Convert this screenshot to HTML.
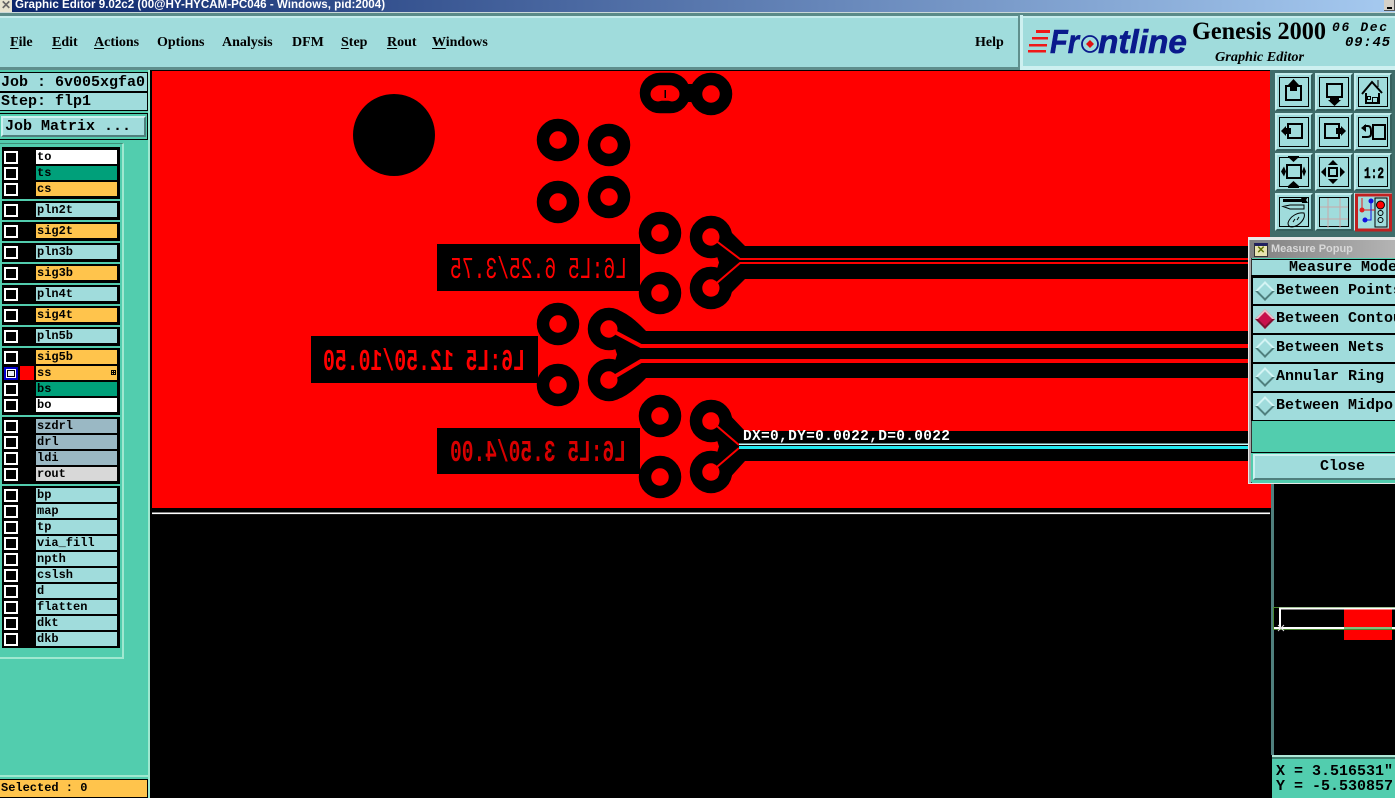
<!DOCTYPE html>
<html><head><meta charset="utf-8"><style>
html,body{margin:0;padding:0;width:1395px;height:798px;overflow:hidden;background:#000}
div{position:absolute;box-sizing:border-box}
svg{position:absolute;left:0;top:0}
.m{font:bold 15px "Liberation Mono",monospace;color:#000;white-space:pre}
.menu{font:bold 14px "Liberation Serif",serif;top:35px;color:#000;white-space:pre}
.menu u{text-underline-offset:2px}
.f{left:2px;width:118px;background:#000}
.l{left:36px;width:81px;height:14px;font:bold 12px/15px "Liberation Mono",monospace;padding-left:1px;color:#000;white-space:pre}
.c{left:4px;width:14px;height:13px;background:#000;border:2px solid #fff}
.c.sel{border-color:#0000c8;background:#fff}
.c.sel:after{content:"";position:absolute;left:1px;top:1px;width:8px;height:7px;background:#e8f0f0;border:1px solid #000;box-sizing:border-box}
.a{background:#a0dcdc}.o{background:#ffc44c}.g{background:#00a07a}.w{background:#fff}.s{background:#9ab8c4}
.b{background:#a0dcdc;border:2px solid;border-color:#c2ecec #36605e #36605e #c2ecec;width:38px;height:38px}
.b:after{content:"";position:absolute;left:2px;top:2px;right:2px;bottom:2px;border:1px solid #000}
.row{left:3px;width:147px;height:29px;background:#a0dcdc;border-top:2px solid #000}
.row span{position:absolute;left:25px;top:4px;font:bold 15px "Liberation Mono",monospace;white-space:pre}
.d{position:absolute;left:5px;top:6px;width:10px;height:10px;transform:rotate(45deg);border:2px solid;border-color:#d4f4f4 #4f7f7d #4f7f7d #d4f4f4}
</style></head><body>

<svg width="1395" height="798" viewBox="0 0 1395 798">
<rect x="152" y="71" width="1120" height="437" fill="#f00"/>
<rect x="152" y="512.5" width="1118" height="1.6" fill="#fff"/>
<circle cx="394" cy="135" r="41" fill="#000"/>
<g fill="#000">
<rect x="437" y="244" width="203" height="47"/>
<rect x="311" y="336" width="227" height="47"/>
<rect x="437" y="428" width="203" height="46"/>
<path d="M726 227L745 246H1270V279H745L726 298L711 288L719 262.5L711 237Z"/>
<path d="M618 310Q630 314 646 331H1270V378H646Q630 395 618 399L609 380L617 354.5L609 329Z"/>
<path d="M726 411L745 431H1270V461H745L726 482L711 472L719 446.5L711 421Z"/>
<rect x="685" y="84" width="15" height="18"/>
</g>
<g fill="none" stroke="#000" stroke-width="12.5">
<rect x="646" y="79" width="38" height="28" rx="14"/>
<circle cx="711" cy="94" r="15"/>
<circle cx="558" cy="140" r="15"/><circle cx="609" cy="145" r="15"/>
<circle cx="558" cy="202" r="15"/><circle cx="609" cy="197" r="15"/>
<circle cx="660" cy="233" r="15"/><circle cx="711" cy="237" r="15"/>
<circle cx="660" cy="293" r="15"/><circle cx="711" cy="288" r="15"/>
<circle cx="558" cy="324" r="15"/><circle cx="609" cy="329" r="15"/>
<circle cx="558" cy="385" r="15"/><circle cx="609" cy="380" r="15"/>
<circle cx="660" cy="416" r="15"/><circle cx="711" cy="421" r="15"/>
<circle cx="660" cy="477" r="15"/><circle cx="711" cy="472" r="15"/>
</g>
<g fill="#f00">
<circle cx="658" cy="94" r="7.500"/><circle cx="672" cy="94" r="7.500"/>
<circle cx="711" cy="94" r="8.500"/>
<circle cx="558" cy="140" r="8.500"/><circle cx="609" cy="145" r="8.500"/>
<circle cx="558" cy="202" r="8.500"/><circle cx="609" cy="197" r="8.500"/>
<circle cx="660" cy="233" r="8.500"/><circle cx="711" cy="237" r="8.500"/>
<circle cx="660" cy="293" r="8.500"/><circle cx="711" cy="288" r="8.500"/>
<circle cx="558" cy="324" r="8.500"/><circle cx="609" cy="329" r="8.500"/>
<circle cx="558" cy="385" r="8.500"/><circle cx="609" cy="380" r="8.500"/>
<circle cx="660" cy="416" r="8.500"/><circle cx="711" cy="421" r="8.500"/>
<circle cx="660" cy="477" r="8.500"/><circle cx="711" cy="472" r="8.500"/>
</g>
<rect x="664.500" y="90" width="1.500" height="8" fill="#000"/>
<g fill="none" stroke="#f00">
<path d="M711 237L740 259H1270M711 288L740 263H1270" stroke-width="2"/>
<path d="M609 329L641 346H1270M609 380L641 361H1270" stroke-width="4"/>
<path d="M711 421L739 445M711 472L739 448" stroke-width="2"/>
</g>
<rect x="739" y="443.500" width="531" height="1.500" fill="#c8ffff"/>
<rect x="739" y="446" width="531" height="3" fill="#20e8f0"/>
<g fill="#f00" font-family="Liberation Mono,monospace">
<text transform="translate(627,278) scale(-1,1)" x="0" y="0" font-size="31" textLength="177" lengthAdjust="spacingAndGlyphs">L6:L5 6.25/3.75</text>
<text transform="translate(525,370) scale(-1,1)" x="0" y="0" font-size="31" font-weight="bold" textLength="202" lengthAdjust="spacingAndGlyphs">L6:L5 12.50/10.50</text>
<text transform="translate(626,461) scale(-1,1)" x="0" y="0" font-size="31" font-weight="bold" fill="#d80000" textLength="176" lengthAdjust="spacingAndGlyphs">L6:L5 3.50/4.00</text>
</g>
<text x="743" y="440" font-family="Liberation Mono,monospace" font-weight="bold" font-size="14.500" fill="#fff" textLength="207" lengthAdjust="spacing">DX=0,DY=0.0022,D=0.0022</text>
</svg>

<!-- title bar -->
<div style="left:0;top:0;width:1395px;height:13px;background:linear-gradient(90deg,#0a246a,#a6caf0);overflow:hidden;border-bottom:1px solid #c8d8d8">
<div style="left:15px;top:-3px;font:bold 11.6px/16px 'Liberation Sans',sans-serif;color:#fff;white-space:pre">Graphic Editor 9.02c2 (00@HY-HYCAM-PC046 - Windows, pid:2004)</div>
<div style="left:0;top:0;width:12px;height:12px;background:#e8e4d0;color:#666;font:bold 12px/11px 'Liberation Sans',sans-serif;text-align:center">&#10005;</div>
<div style="left:1384px;top:0;width:11px;height:11px;background:#d4d0c8;border-right:1px solid #555;border-bottom:1px solid #555"><div style="left:3px;top:7px;width:5px;height:2px;background:#000"></div></div>
</div>

<!-- menu bar -->
<div style="left:0;top:13px;width:1395px;height:57px;background:#a0dcdc;border-top:3px solid #5a8a88;border-bottom:3px solid #5f8f8d"></div>
<div style="left:0;top:16px;width:1395px;height:2px;background:#c4ecec"></div>
<div class="menu" style="left:10px"><u>F</u>ile</div>
<div class="menu" style="left:52px"><u>E</u>dit</div>
<div class="menu" style="left:94px"><u>A</u>ctions</div>
<div class="menu" style="left:157px">Options</div>
<div class="menu" style="left:222px">Analysis</div>
<div class="menu" style="left:292px">DFM</div>
<div class="menu" style="left:341px"><u>S</u>tep</div>
<div class="menu" style="left:387px"><u>R</u>out</div>
<div class="menu" style="left:432px"><u>W</u>indows</div>
<div class="menu" style="left:975px">Help</div>
<div style="left:1018px;top:15px;width:2px;height:52px;background:#5f8f8d"></div>
<div style="left:1020px;top:15px;width:3px;height:55px;background:#cdf0f0"></div>
<div style="left:1021px;top:66px;width:374px;height:4px;background:#cdf0f0"></div>

<!-- logo -->
<svg width="1395" height="70" viewBox="0 0 1395 70">
<g fill="#f01818"><path d="M1036 30H1050V33H1036ZM1032 37H1048V39.500H1032ZM1029 44H1047V46.500H1029ZM1028 50H1046V52.500H1028Z"/></g>
<text x="1050" y="53" font-family="Liberation Sans,sans-serif" font-weight="bold" font-style="italic" font-size="33" fill="#0a1a8c" stroke="#0a1a8c" stroke-width=".6" textLength="29" lengthAdjust="spacingAndGlyphs">Fr</text>
<circle cx="1090" cy="44" r="8" fill="none" stroke="#0a1a8c" stroke-width="1.800"/>
<path d="M1090 40L1094 44L1090 48L1086 44Z" fill="#e01010"/>
<text x="1098" y="53" font-family="Liberation Sans,sans-serif" font-weight="bold" font-style="italic" font-size="33" fill="#0a1a8c" stroke="#0a1a8c" stroke-width=".6" textLength="89" lengthAdjust="spacingAndGlyphs">ntline</text>
<text x="1192" y="39" font-family="Liberation Serif,serif" font-weight="bold" font-size="25" fill="#000" textLength="134" lengthAdjust="spacingAndGlyphs">Genesis 2000</text>
<text x="1332" y="31" font-family="Liberation Mono,monospace" font-weight="bold" font-style="italic" font-size="13" fill="#000" textLength="55">06 Dec</text>
<text x="1345" y="46" font-family="Liberation Mono,monospace" font-weight="bold" font-style="italic" font-size="14" fill="#000" textLength="45">09:45</text>
<text x="1215" y="61" font-family="Liberation Serif,serif" font-weight="bold" font-style="italic" font-size="14" fill="#000" textLength="89" lengthAdjust="spacingAndGlyphs">Graphic Editor</text>
</svg>

<!-- left panel -->
<div style="left:0;top:70px;width:150px;height:728px;background:#52cdae;border-right:2px solid #9fe8d0"></div>
<div style="left:0;top:72px;width:148px;height:20px;background:#a0dcdc;border:1px solid #000;border-left:0"></div>
<div class="m" style="left:1px;top:74px">Job : 6v005xgfa0</div>
<div style="left:0;top:92px;width:148px;height:19px;background:#a0dcdc;border:1px solid #000;border-left:0"></div>
<div class="m" style="left:1px;top:93px">Step: flp1</div>
<div style="left:0;top:113px;width:148px;height:27px;border:1px solid #000;border-left:0"></div>
<div style="left:1px;top:116px;width:145px;height:21px;background:#a0dcdc;border:2px solid;border-color:#cdf0f0 #4f7f7d #4f7f7d #cdf0f0"></div>
<div class="m" style="left:5px;top:118px">Job Matrix ...</div>
<div style="left:0;top:143px;width:124px;height:516px;border-right:2px solid #9fe8d0;border-bottom:2px solid #9fe8d0;border-top:1px solid #3e8e78"></div>

<div class="f" style="top:147px;height:52px"></div>
<div class="f" style="top:201px;height:19px"></div>
<div class="f" style="top:222px;height:19px"></div>
<div class="f" style="top:243px;height:19px"></div>
<div class="f" style="top:264px;height:19px"></div>
<div class="f" style="top:285px;height:19px"></div>
<div class="f" style="top:306px;height:19px"></div>
<div class="f" style="top:327px;height:19px"></div>
<div class="f" style="top:348px;height:67px"></div>
<div class="f" style="top:417px;height:67px"></div>
<div class="f" style="top:486px;height:162px"></div>

<div class="c" style="top:151px"></div><div class="l w" style="top:150px">to</div>
<div class="c" style="top:167px"></div><div class="l g" style="top:166px">ts</div>
<div class="c" style="top:183px"></div><div class="l o" style="top:182px">cs</div>
<div class="c" style="top:204px"></div><div class="l a" style="top:203px">pln2t</div>
<div class="c" style="top:225px"></div><div class="l o" style="top:224px">sig2t</div>
<div class="c" style="top:246px"></div><div class="l a" style="top:245px">pln3b</div>
<div class="c" style="top:267px"></div><div class="l o" style="top:266px">sig3b</div>
<div class="c" style="top:288px"></div><div class="l a" style="top:287px">pln4t</div>
<div class="c" style="top:309px"></div><div class="l o" style="top:308px">sig4t</div>
<div class="c" style="top:330px"></div><div class="l a" style="top:329px">pln5b</div>
<div class="c" style="top:351px"></div><div class="l o" style="top:350px">sig5b</div>
<div class="c sel" style="top:367px"></div><div style="left:20px;top:366px;width:14px;height:14px;background:#f00"></div><div class="l o" style="top:366px">ss<div style="left:75px;top:4px;width:5px;height:5px;border:1px solid #000;background:linear-gradient(#000,#000) center/100% 1px no-repeat,linear-gradient(#000,#000) center/1px 100% no-repeat"></div></div>
<div class="c" style="top:383px"></div><div class="l g" style="top:382px">bs</div>
<div class="c" style="top:399px"></div><div class="l w" style="top:398px">bo</div>
<div class="c" style="top:420px"></div><div class="l s" style="top:419px">szdrl</div>
<div class="c" style="top:436px"></div><div class="l s" style="top:435px">drl</div>
<div class="c" style="top:452px"></div><div class="l s" style="top:451px">ldi</div>
<div class="c" style="top:468px"></div><div class="l" style="top:467px;background:#d8d8d8">rout</div>
<div class="c" style="top:489px"></div><div class="l a" style="top:488px">bp</div>
<div class="c" style="top:505px"></div><div class="l a" style="top:504px">map</div>
<div class="c" style="top:521px"></div><div class="l a" style="top:520px">tp</div>
<div class="c" style="top:537px"></div><div class="l a" style="top:536px">via_fill</div>
<div class="c" style="top:553px"></div><div class="l a" style="top:552px">npth</div>
<div class="c" style="top:569px"></div><div class="l a" style="top:568px">cslsh</div>
<div class="c" style="top:585px"></div><div class="l a" style="top:584px">d</div>
<div class="c" style="top:601px"></div><div class="l a" style="top:600px">flatten</div>
<div class="c" style="top:617px"></div><div class="l a" style="top:616px">dkt</div>
<div class="c" style="top:633px"></div><div class="l a" style="top:632px">dkb</div>

<div style="left:0;top:775px;width:150px;height:2px;background:#9fe8d0"></div>
<div style="left:0;top:779px;width:148px;height:19px;background:#ffc44c;border:1px solid #000;border-left:0"></div>
<div class="m" style="left:1px;top:781px;font-size:12px">Selected : 0</div>

<!-- right column -->
<div style="left:1270px;top:70px;width:125px;height:170px;background:#3f6c6a"></div>
<div style="left:1271px;top:240px;width:3px;height:515px;background:#4f7f7d"></div>
<div class="b" style="left:1275px;top:73px"></div><div class="b" style="left:1315px;top:73px"></div><div class="b" style="left:1354px;top:73px"></div>
<div class="b" style="left:1275px;top:113px"></div><div class="b" style="left:1315px;top:113px"></div><div class="b" style="left:1354px;top:113px"></div>
<div class="b" style="left:1275px;top:153px"></div><div class="b" style="left:1315px;top:153px"></div><div class="b" style="left:1354px;top:153px"></div>
<div class="b" style="left:1275px;top:193px"></div><div class="b" style="left:1315px;top:193px"></div><div class="b" style="left:1354px;top:193px"></div>

<svg width="1395" height="240" viewBox="0 0 1395 240">
<g fill="none" stroke="#000" stroke-width="2">
<rect x="1286" y="86" width="15" height="14"/>
<rect x="1327" y="84" width="15" height="13"/>
<path d="M1366 93V103H1379V93M1362 94L1372 82L1382 93"/>
<rect x="1288" y="124" width="14" height="14"/>
<rect x="1325" y="124" width="14" height="14"/>
<rect x="1373" y="125" width="12" height="14"/>
<path d="M1364 126H1368Q1371 126 1371 131V134Q1371 137 1367 137H1362"/>
<rect x="1287" y="165" width="14" height="13"/>
<rect x="1329" y="168" width="8" height="8"/>
</g>
<path d="M1367.500 96.500h3v3h-3zM1372.500 97.500h5v5.500h-5zM1378 80v7" fill="none" stroke="#000"/>
<g fill="#000">
<path d="M1293.500 79L1299 85H1297V91H1290V85H1288Z"/>
<path d="M1330 97H1339V100H1341L1334.500 106L1328 100H1330Z"/>
<path d="M1281 131L1286 126V128H1291V134H1286V136Z"/>
<path d="M1346 131L1341 126V128H1336V134H1341V136Z"/>
<path d="M1361 128L1366 124V132Z"/>
<path d="M1288 157H1299L1293.500 162ZM1288 186H1299L1293.500 181ZM1288 186H1299V188H1288ZM1288 156H1299V158H1288ZM1281 171.500L1284 166.500L1286 171.500L1284 176.500ZM1306 171.500L1304 166.500L1302 171.500L1304 176.500Z"/>
<path d="M1333 160L1338 165H1328ZM1333 184L1338 179H1328ZM1321 172L1326 167V177ZM1345 172L1340 167V177Z"/>
<path d="M1283 199H1302V202H1283Z"/>
<path d="M1301 197H1308L1306 200L1308 203H1302Z"/>
</g>
<text x="1364" y="178" font-family="Liberation Mono,monospace" font-weight="bold" font-size="16" stroke="#000" stroke-width=".5" textLength="20" lengthAdjust="spacingAndGlyphs">1:2</text>
<path d="M1283 206.500L1290 205H1304V209H1290Z" fill="#a0dcdc" stroke="#000"/>
<path d="M1288 223C1290 216 1298 212 1304 213C1306 218 1300 226 1292 227C1289 227 1288 225 1288 223Z" fill="none" stroke="#000"/>
<path d="M1293 222L1295 219M1297 220L1299 217" stroke="#000"/>
<g stroke="#c8a8a8" fill="none"><path d="M1320 207H1348M1320 219H1348M1328 198V228M1340 198V228"/></g>
<rect x="1356.500" y="195" width="34" height="35" fill="#a0dcdc" stroke="#c02020" stroke-width="3"/>
<rect x="1375" y="198" width="12" height="29" fill="#a0dcdc" stroke="#000"/>
<circle cx="1380.500" cy="205" r="4" fill="#f00" stroke="#000"/>
<circle cx="1380.500" cy="213" r="2.500" fill="none" stroke="#000"/>
<circle cx="1380.500" cy="220" r="2.500" fill="none" stroke="#000"/>
<path d="M1362 198V210H1375" fill="none" stroke="#e02020"/>
<path d="M1371 201V220H1365" fill="none" stroke="#1010e0"/>
<circle cx="1362" cy="210" r="2.500" fill="#e02020"/>
<circle cx="1371" cy="201" r="2.500" fill="#1010e0"/>
<circle cx="1365" cy="220" r="2.500" fill="#1010e0"/>
</svg>

<!-- popup -->
<div style="left:1248px;top:237px;width:147px;height:247px;background:#a9a9a9;border:1px solid #e8e8e8;border-right:0;border-top:3px solid #e8e8e8"></div>
<div style="left:1250px;top:240px;width:145px;height:18px;background:linear-gradient(90deg,#808080,#b4b4b4)"></div>
<div style="left:1254px;top:243px;width:14px;height:14px;background:#e8e4b0;border:1px solid #333;border-top:3px solid #202060;color:#607000;font:bold 10px/10px 'Liberation Sans',sans-serif;text-align:center">&#10005;</div>
<div style="left:1271px;top:242px;font:bold 11px/14px 'Liberation Sans',sans-serif;color:#d8d8d8;white-space:pre">Measure Popup</div>
<div style="left:1251px;top:258px;width:144px;height:225px;background:#52cdae;border-left:1px solid #333"></div>
<div style="left:1252px;top:259px;width:143px;height:17px;background:#a0dcdc;border-top:1px solid #000"></div>
<div class="m" style="left:1289px;top:259px">Measure Mode</div>
<div style="left:1251px;top:275px;width:144px;height:146px;background:#000"></div>
<div class="row" style="top:276px;left:1253px;width:142px"><i class="d"></i><span style="left:23px">Between Points</span></div>
<div class="row" style="top:304px;left:1253px;width:142px"><i class="d" style="background:#c8104c;border-color:#e8c0c8 #7f1030 #7f1030 #e8c0c8"></i><span style="left:23px">Between Contours</span></div>
<div class="row" style="top:333px;left:1253px;width:142px"><i class="d"></i><span style="left:23px">Between Nets</span></div>
<div class="row" style="top:362px;left:1253px;width:142px"><i class="d"></i><span style="left:23px">Annular Ring</span></div>
<div class="row" style="top:391px;left:1253px;width:142px;height:29px"><i class="d"></i><span style="left:23px">Between Midpo</span></div>
<div style="left:1251px;top:452px;width:144px;height:30px;border-top:1px solid #000;background:#52cdae"></div>
<div style="left:1253px;top:454px;width:142px;height:26px;background:#a0dcdc;border:2px solid;border-color:#cdf0f0 #4f7f7d #4f7f7d #cdf0f0;border-right:0"></div>
<div class="m" style="left:1320px;top:458px">Close</div>

<!-- minimap -->
<svg width="1395" height="798" viewBox="0 0 1395 798" style="pointer-events:none">
<rect x="1344" y="609" width="48" height="31" fill="#f00"/>
<rect x="1273.500" y="607.500" width="122" height="22" fill="none" stroke="#4a8a30"/>
<path d="M1280 628V608.500H1395" fill="none" stroke="#fff" stroke-width="2"/>
<path d="M1274 628H1395" stroke="#fff" stroke-width="2"/>
<path d="M1344 628H1392" stroke="#80c080" stroke-width="2"/>
<path d="M1278 625L1284 631M1284 625L1278 631" stroke="#ddd"/>
</svg>

<!-- coordinates -->
<div style="left:1272px;top:755px;width:123px;height:43px;background:#52cdae;border-top:2px solid #b0e8d8"></div>
<div style="left:1272px;top:757px;width:123px;height:2px;background:#3e7e6e"></div>
<div class="m" style="left:1276px;top:763px">X = 3.516531"</div>
<div class="m" style="left:1276px;top:778px">Y = -5.530857</div>
</body></html>
